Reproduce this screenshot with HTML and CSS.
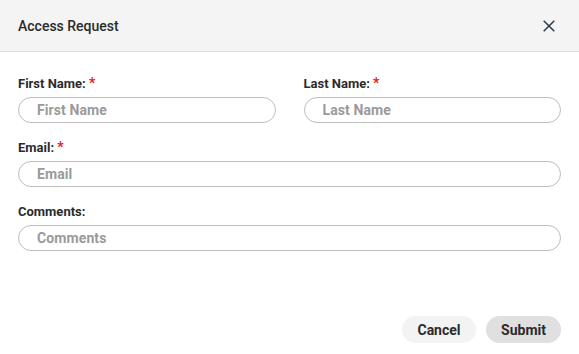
FILE: index.html
```html
<!DOCTYPE html>
<html>
<head>
<meta charset="utf-8">
<link rel="stylesheet" href="styles.css">
</head>
<body>
<div class="modal">
  <div class="header">
    <div class="title">Access Request</div>
    <button class="close" aria-label="Close">
      <svg width="12" height="12" viewBox="0 0 12 12"><path d="M0.7 0.7L11.3 11.3M11.3 0.7L0.7 11.3" stroke="#2b3a4a" stroke-width="1.5" fill="none"/></svg>
    </button>
  </div>
  <div class="body">
    <div class="row two">
      <div class="field">
        <label class="label">First Name: <span class="req">*</span></label>
        <input class="input" placeholder="First Name">
      </div>
      <div class="field">
        <label class="label">Last Name: <span class="req">*</span></label>
        <input class="input" placeholder="Last Name">
      </div>
    </div>
    <div class="field">
      <label class="label">Email: <span class="req">*</span></label>
      <input class="input" placeholder="Email">
    </div>
    <div class="field">
      <label class="label">Comments:</label>
      <input class="input" placeholder="Comments">
    </div>
  </div>
  <div class="footer">
    <button class="btn cancel">Cancel</button>
    <button class="btn submit">Submit</button>
  </div>
</div>
</body>
</html>
```
FILE: styles.css
```css
* { box-sizing: border-box; }
html, body { margin: 0; padding: 0; background: #fff; }
body { font-family: Roboto, "Liberation Sans", sans-serif; color: #333; }
.modal {
  width: 579px;
  height: 354px;
  display: flex;
  flex-direction: column;
  background: #fff;
}
.header {
  height: 52px;
  background: #f4f4f4;
  border-bottom: 1px solid #dcdcdc;
  display: flex;
  align-items: center;
  justify-content: space-between;
  padding: 0 24px 0 18px;
}
.title {
  font-size: 14px;
  font-weight: 500;
  color: #2b2b2b;
}
.close {
  border: 0;
  background: transparent;
  padding: 0;
  width: 12px;
  height: 12px;
  display: flex;
}
.body {
  flex: 1;
  padding: 24px 18px 0 18px;
  display: flex;
  flex-direction: column;
  gap: 17px;
}
.row.two {
  display: grid;
  grid-template-columns: 1fr 1fr;
  column-gap: 28px;
}
.field {
  display: flex;
  flex-direction: column;
  gap: 6px;
}
.label {
  font-size: 13px;
  font-weight: 700;
  line-height: 15px;
  color: #2b2b2b;
}
.req { color: #f01818; font-size: 14px; }
.input {
  height: 26px;
  border: 1px solid #bdbdbd;
  border-radius: 13px;
  padding: 0 18px;
  font-family: Roboto, "Liberation Sans", sans-serif;
  font-size: 14px;
  font-weight: 700;
  letter-spacing: 0.1px;
  color: #333;
  outline: none;
  width: 100%;
}
.input::placeholder { color: #9a9a9a; }
.footer {
  display: flex;
  justify-content: flex-end;
  gap: 10px;
  padding: 0 18px 11px 0;
}
.btn {
  height: 27px;
  border: 0;
  border-radius: 14px;
  font-family: Roboto, "Liberation Sans", sans-serif;
  font-size: 14px;
  font-weight: 700;
  color: #2b2b2b;
  padding: 0;
}
.cancel { background: #f3f3f3; width: 74px; }
.submit { background: #e0e0e0; width: 75px; }
```
